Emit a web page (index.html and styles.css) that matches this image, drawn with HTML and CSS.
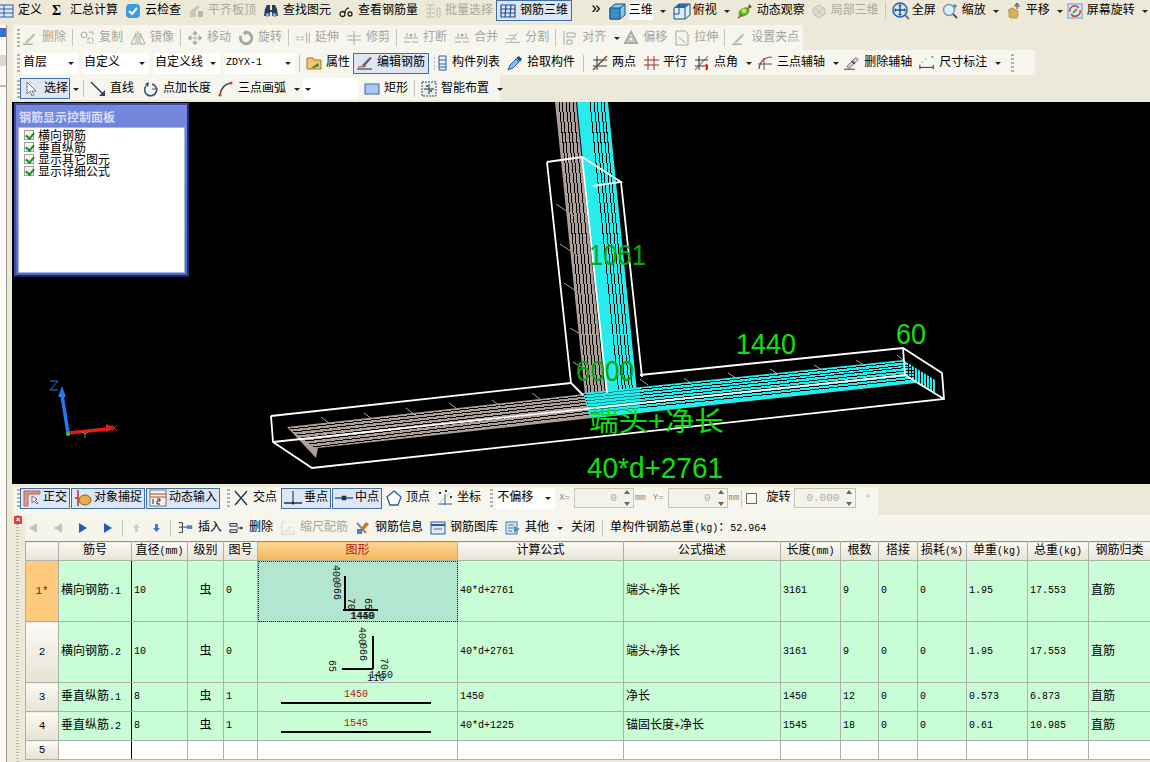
FILE: index.html
```html
<!DOCTYPE html>
<html lang="zh">
<head>
<meta charset="utf-8">
<title>钢筋三维</title>
<link rel="stylesheet" href="styles.css">
</head>
<body>
<svg class="defs" width="0" height="0">
  <symbol id="def" viewBox="0 0 16 16"><rect x="1" y="2" width="14" height="12" fill="#dbe8f8" stroke="#2a5fa8"/><path d="M1 6h14M6 2v12M1 10h14" stroke="#2a5fa8"/></symbol>
  <symbol id="cloud" viewBox="0 0 16 16"><rect x="1" y="1" width="14" height="14" rx="4" fill="#3d9be0"/><path d="M4 8l3 3 5-6" fill="none" stroke="#fff" stroke-width="2"/></symbol>
  <symbol id="level" viewBox="0 0 16 16"><path d="M2 14V8l8-6 2 2-4 4v6z" fill="#c9c8c0"/><rect x="10" y="8" width="5" height="6" fill="#b8b7ae"/></symbol>
  <symbol id="find" viewBox="0 0 16 16"><path d="M2 6l2-4h3v5h2V2h3l2 4 1 7h-6V9H7v4H1z" fill="#23415f"/><circle cx="4.500" cy="12" r="2" fill="#7fa4c8"/><circle cx="11.500" cy="12" r="2" fill="#7fa4c8"/></symbol>
  <symbol id="see" viewBox="0 0 16 16"><path d="M2 11a2.500 2.500 0 105 0 2.500 2.500 0 10-5 0M7 10c0-3 2-5 4-5M10 11a2 2 0 104 0 2 2 0 10-4 0" fill="none" stroke="#222" stroke-width="1.300"/></symbol>
  <symbol id="batch" viewBox="0 0 16 16"><path d="M1 2h9M1 6h9M1 10h9M1 14h9M5 2v12M12 5h3v9h-3z" fill="none" stroke="#bdbcb2"/></symbol>
  <symbol id="rb3d" viewBox="0 0 16 16"><path d="M1 2h14v12H1zM1 6h14M1 10h14M6 2l-1 12M11 2l-1 12" fill="none" stroke="#1c4f8e" stroke-width="1.200"/></symbol>
  <symbol id="cube" viewBox="0 0 18 18"><path d="M1 6l5-4h10v11l-5 4H1z" fill="#7fc7e8" stroke="#1d4f80"/><path d="M1 6h10v11H1z" fill="#3c8dc6" stroke="#1d4f80"/><path d="M11 6l5-4" stroke="#1d4f80"/></symbol>
  <symbol id="topv" viewBox="0 0 18 18"><path d="M1 6l5-4h11v11l-5 4H1z" fill="#dbeef8" stroke="#1d4f80"/><path d="M1 6l5-4h11l-5 4z" fill="#2e6ca6"/><path d="M12 6v11M6 2v10H1" fill="none" stroke="#1d4f80"/></symbol>
  <symbol id="orbit" viewBox="0 0 16 16"><ellipse cx="7" cy="9" rx="6" ry="4" transform="rotate(-35 7 9)" fill="#5aa82c"/><circle cx="7" cy="8" r="2.500" fill="#c7e35a"/><path d="M12 1l3 3-4 2z" fill="#7a4a20"/><path d="M1 15l4-3" stroke="#c03030" stroke-width="1.500"/></symbol>
  <symbol id="part" viewBox="0 0 16 16"><path d="M8 2l6 4v5l-6 4-6-4V6z" fill="#dddcd2" stroke="#c0bfb5"/><path d="M4 5l8 7M12 5l-8 7" stroke="#c0bfb5"/></symbol>
  <symbol id="full" viewBox="0 0 18 18"><circle cx="8" cy="8" r="7" fill="#d8e8f8" stroke="#2a5fa8" stroke-width="1.500"/><path d="M8 3v10M3 8h10" stroke="#1f4f9a" stroke-width="1.500"/><path d="M8 2l2 2H6zM8 14l2-2H6zM2 8l2-2v4zM14 8l-2-2v4z" fill="#1f4f9a"/><path d="M13 13l4 4" stroke="#777" stroke-width="2"/></symbol>
  <symbol id="zoomi" viewBox="0 0 16 16"><circle cx="7" cy="7" r="5.500" fill="#e0edf8" stroke="#7b98b8" stroke-width="1.500"/><path d="M11 11l4 4" stroke="#555" stroke-width="2"/><path d="M13 1v4M11 3h4" stroke="#3a70b0"/></symbol>
  <symbol id="pan" viewBox="0 0 16 16"><path d="M3 14V9L2 7l2-1 1 1V5h2v1h2v1h2l1 2v3l-1 3H4z" fill="#d4b25c" stroke="#9a7a30" stroke-width=".6"/><path d="M11 0v6M9 2l2-2 2 2M8 3h6" fill="none" stroke="#446" stroke-width=".9"/></symbol>
  <symbol id="rot" viewBox="0 0 16 16"><rect x="1" y="1" width="14" height="14" fill="#d8eaf8" stroke="#54a0d8"/><path d="M3 9a5 5 0 019-4M13 7a5 5 0 01-9 4" fill="none" stroke="#d8382a" stroke-width="1.500"/><path d="M6 10l4-4" stroke="#5ba83c" stroke-width="2"/></symbol>

  <symbol id="pen" viewBox="0 0 18 16"><path d="M3 13L13 3l2 2L6 14z" fill="currentColor" opacity=".7"/><path d="M1 15h11" stroke="currentColor" stroke-width="1.500"/></symbol>
  <symbol id="copy" viewBox="0 0 16 16"><circle cx="5" cy="5" r="3" fill="none" stroke="currentColor"/><path d="M9 8h5v5H9z" fill="none" stroke="currentColor" stroke-dasharray="2 1"/><path d="M10 2h4v3" fill="none" stroke="currentColor"/></symbol>
  <symbol id="mirror" viewBox="0 0 16 16"><path d="M8 1v14M6 3L1 14h5zM10 3l5 11h-5z" fill="none" stroke="currentColor"/></symbol>
  <symbol id="move" viewBox="0 0 14 14"><path d="M7 1v12M1 7h12M7 1L5 3.500h4zM7 13l-2-2.500h4zM1 7l2.500-2v4zM13 7l-2.500-2v4z" fill="currentColor" stroke="currentColor" stroke-width=".7"/></symbol>
  <symbol id="rotate" viewBox="0 0 14 14"><path d="M7 2a5 5 0 11-4.500 3" fill="none" stroke="currentColor" stroke-width="2.500"/><path d="M7 0v5L4 2.500z" fill="currentColor"/></symbol>
  <symbol id="ext" viewBox="0 0 18 16"><path d="M1 7h4M1 10h4M7 7h3M7 10h3" stroke="currentColor"/><path d="M13 2v12M16 2v12" stroke="currentColor"/></symbol>
  <symbol id="trim" viewBox="0 0 16 16"><path d="M1 6h14M1 10h14M8 1v14" stroke="currentColor"/></symbol>
  <symbol id="brk" viewBox="0 0 16 16"><path d="M1 12h6M9 12h6M1 8h14M4 3v4M12 3v4" stroke="currentColor"/><circle cx="8" cy="5" r="1.500" fill="currentColor"/></symbol>
  <symbol id="split" viewBox="0 0 18 16"><path d="M1 13h16M1 9h12M4 5h8M14 2L6 12" stroke="currentColor" fill="none"/></symbol>
  <symbol id="align" viewBox="0 0 16 16"><path d="M2 1v14M5 3h8v4H5zM5 10h5v4H5z" fill="none" stroke="currentColor"/></symbol>
  <symbol id="offset" viewBox="0 0 16 16"><path d="M8 2l6 11H2z" fill="none" stroke="currentColor" stroke-width="2"/><path d="M8 6l3 5H5z" fill="none" stroke="currentColor"/></symbol>
  <symbol id="stretch" viewBox="0 0 16 16"><path d="M2 1h9l3 3v11H2zM5 7l6 6" fill="none" stroke="currentColor"/></symbol>

  <symbol id="prop" viewBox="0 0 16 16"><path d="M1 3h6l1 2h7v9H1z" fill="#f0c870" stroke="#9a7a30"/><path d="M5 13l7-5 1 3-5 2z" fill="#3a8a3a"/></symbol>
  <symbol id="edit" viewBox="0 0 16 16"><path d="M1 12c3-1 5 1 8-1" fill="none" stroke="#c03030"/><path d="M5 10l8-8 2 1-8 9z" fill="#667"/><path d="M0 14h15" stroke="#222"/></symbol>
  <symbol id="list" viewBox="0 0 16 16"><path d="M2 3h2M2 7h2M2 11h2M2 14h2" stroke="#778" stroke-dasharray="1 1"/><path d="M7 1h7v14H7zM7 5h7M7 9h7M7 12h7" fill="#e8f0fa" stroke="#2a5fa8"/></symbol>
  <symbol id="pick" viewBox="0 0 16 16"><path d="M1 15l2-5 6-6 3 3-6 6z" fill="#8ab8e8" stroke="#2a5fa8"/><path d="M9 3l3-2 3 3-2 3z" fill="#1d4f9a"/></symbol>
  <symbol id="twop" viewBox="0 0 16 16"><path d="M1 5h14M1 11h14M5 1v14" stroke="#333"/><path d="M1 15L15 1" stroke="#7a4a20" stroke-width="1.500"/></symbol>
  <symbol id="para" viewBox="0 0 16 16"><path d="M1 5h15M1 10h15M5 1v14M11 1v14" stroke="#a03030"/></symbol>
  <symbol id="ang" viewBox="0 0 16 16"><path d="M1 5h13M1 11h13M5 1v14" stroke="#333"/><path d="M1 15L14 1" stroke="#555"/><path d="M12 9a5 5 0 010 6" fill="none" stroke="#d82020" stroke-width="2"/></symbol>
  <symbol id="arc3" viewBox="0 0 16 16"><path d="M2 14C3 6 8 2 15 2" fill="none" stroke="#c03030" stroke-width="1.200"/><path d="M1 9h14M7 3v12" stroke="#556"/></symbol>
  <symbol id="delx" viewBox="0 0 18 16"><path d="M3 12L13 2l3 2L6 14z" fill="#d8d0c0" stroke="#667"/><path d="M9 6l3 3" stroke="#4a3a8a" stroke-width="2"/><path d="M0 15h12" stroke="#222"/></symbol>
  <symbol id="dim" viewBox="0 0 18 16"><path d="M1 10v5M16 10v5M1 13h15" stroke="#222"/><path d="M3 7h1M7 4h1M14 1h2" stroke="#6a9a5a" stroke-width="2"/></symbol>

  <symbol id="cur" viewBox="0 0 12 16"><path d="M2 1v12l3-3 2 5 2-1-2-4h4z" fill="#fff" stroke="#778"/></symbol>
  <symbol id="lin" viewBox="0 0 16 16"><path d="M1 1l13 13" stroke="#345" stroke-width="1.500"/><path d="M15 15V9l-6 6z" fill="#345"/></symbol>
  <symbol id="ptlen" viewBox="0 0 16 16"><path d="M3 5a6 6 0 106-2" fill="none" stroke="#2a4f80" stroke-width="1.500"/><path d="M6 1L2 3l3 3z" fill="#345"/><path d="M9 8h6" stroke="#c03030"/></symbol>
  <symbol id="arc" viewBox="0 0 16 16"><path d="M2 14C3 6 7 3 13 2" fill="none" stroke="#444" stroke-width="1.500"/><circle cx="2" cy="14" r="1.500" fill="#d84020"/><circle cx="13" cy="2" r="1.500" fill="#d84020"/></symbol>
  <symbol id="rec" viewBox="0 0 16 16"><rect x="1" y="3" width="14" height="10" fill="#a8c8f0" stroke="#3a6ab0"/></symbol>
  <symbol id="smart" viewBox="0 0 16 16"><rect x="1" y="1" width="14" height="14" fill="#e8efe8" stroke="#445" stroke-dasharray="2 1"/><path d="M8 3v10M3 8h10" stroke="#333"/><path d="M5 4h2v2H5zM9 9h2v2H9z" fill="#2a70c0"/></symbol>

  <symbol id="ortho" viewBox="0 0 18 18"><path d="M1 2h16v3H5v12H1z" fill="#d89a8a" stroke="#b06a5a"/><path d="M9 7v7l2-2 3 3 1-1-3-3 2-1z" fill="#fff" stroke="#778"/></symbol>
  <symbol id="snap" viewBox="0 0 18 18"><path d="M4 1v16M1 9h3" stroke="#b03030" stroke-width="1.500"/><ellipse cx="11" cy="11" rx="6" ry="5" fill="#e0b050" stroke="#906010"/></symbol>
  <symbol id="dyn" viewBox="0 0 18 18"><rect x="1" y="1" width="16" height="16" fill="#f4f4ea" stroke="#777"/><path d="M1 5h16M1 8h16" stroke="#b04a30"/><path d="M4 10v5M8 10h3v2H8v3h3" fill="none" stroke="#223"/></symbol>
  <symbol id="cross" viewBox="0 0 16 16"><path d="M2 1l12 14M14 1L2 15" stroke="#234" stroke-width="1.300"/></symbol>
  <symbol id="perp" viewBox="0 0 18 16"><path d="M9 1v12" stroke="#2a5fa8" stroke-width="1.400"/><path d="M0 13h18" stroke="#234" stroke-width="1.500"/><circle cx="9" cy="13" r="1.500" fill="#234"/></symbol>
  <symbol id="midp" viewBox="0 0 16 16"><path d="M0 8h16" stroke="#2a5fa8" stroke-width="1.400"/><rect x="6" y="6" width="4" height="4" fill="#234"/></symbol>
  <symbol id="vert" viewBox="0 0 16 16"><path d="M8 1l7 6-3 8H4L1 7z" fill="#fff" stroke="#2a5fa8" stroke-width="1.300"/></symbol>
  <symbol id="coord" viewBox="0 0 16 16"><path d="M1 14h14M8 4v11" stroke="#2a5fa8"/><path d="M3 12l10-9" stroke="#5a9a5a" stroke-dasharray="1 2"/><path d="M2 3h2M8 1h2M13 7h2" stroke="#334" stroke-width="2"/></symbol>

  <symbol id="ins" viewBox="0 0 18 14"><path d="M1 1h4M1 6h4M1 12h4M5 1v11" stroke="#223"/><path d="M6 6h4" stroke="#223"/><rect x="10" y="4" width="6" height="4" fill="#4a80d0"/></symbol>
  <symbol id="rm" viewBox="0 0 18 14"><path d="M1 2h8v3H1zM1 9h8v3H1z" fill="#dde" stroke="#223"/><path d="M9 7h6" stroke="#223"/><path d="M16 7l-3-2v4z" fill="#223"/></symbol>
  <symbol id="scale" viewBox="0 0 16 16"><path d="M2 14V2h3M2 14h12V11M5 11h6M8 8h3" fill="none" stroke="#b8b7ae" stroke-dasharray="1 1"/></symbol>
  <symbol id="info" viewBox="0 0 16 16"><path d="M2 3l9 10" stroke="#888" stroke-width="2"/><path d="M11 2l3 2-8 9-3 1 1-3z" fill="#c07a30"/><path d="M2 9h5v5H2z" fill="#4a80d0"/></symbol>
  <symbol id="lib" viewBox="0 0 16 16"><rect x="1" y="2" width="14" height="12" fill="#dce8f6" stroke="#2a5fa8"/><path d="M1 5h14" stroke="#2a5fa8" stroke-width="2"/><path d="M4 9h8" stroke="#667"/></symbol>
  <symbol id="other" viewBox="0 0 16 16"><rect x="1" y="2" width="11" height="12" fill="#d8e6f6" stroke="#4a7ab0"/><path d="M3 5h6M3 8h6M3 11h4" stroke="#4a7ab0"/><path d="M9 6l6 3-6 4z" fill="#4a90d0"/></symbol>
</svg>

<div class="tb tb-top">
  <span class="it first"><svg class="ic"><use href="#def"/></svg>定义</span>
  <span class="it wide"><b class="sigma">Σ</b>汇总计算</span>
  <span class="it"><svg class="ic"><use href="#cloud"/></svg>云检查</span>
  <span class="it off"><svg class="ic"><use href="#level"/></svg>平齐板顶</span>
  <span class="it"><svg class="ic"><use href="#find"/></svg>查找图元</span>
  <span class="it"><svg class="ic"><use href="#see"/></svg>查看钢筋量</span>
  <span class="it off"><svg class="ic"><use href="#batch"/></svg>批量选择</span>
  <span class="it on tight"><svg class="ic"><use href="#rb3d"/></svg>钢筋三维</span>
  <span class="more">»</span>
  <div class="view-tools">
    <span class="it snug"><svg class="ic big"><use href="#cube"/></svg><span class="white">三维</span></span><i class="car"></i>
    <span class="it snug"><svg class="ic big"><use href="#topv"/></svg>俯视</span><i class="car"></i>
    <span class="it"><svg class="ic"><use href="#orbit"/></svg>动态观察</span>
    <span class="it off"><svg class="ic"><use href="#part"/></svg>局部三维</span>
    <i class="sep"></i>
    <span class="it snug"><svg class="ic big"><use href="#full"/></svg>全屏</span>
    <span class="it"><svg class="ic"><use href="#zoomi"/></svg>缩放</span><i class="car"></i>
    <span class="it"><svg class="ic"><use href="#pan"/></svg>平移</span><i class="car"></i>
    <span class="it pull3"><svg class="ic"><use href="#rot"/></svg>屏幕旋转</span><i class="car"></i>
  </div>
</div>

<div class="main">
  <div class="side"><i class="side-tab"></i><i class="side-a"></i><i class="side-b"></i></div>
  <div class="work">
    <div class="tb band disabled w-790">
      <i class="grip"></i>
      <span class="it"><svg class="ic"><use href="#pen"/></svg>删除</span><i class="sep"></i>
      <span class="it"><svg class="ic"><use href="#copy"/></svg>复制</span>
      <span class="it"><svg class="ic"><use href="#mirror"/></svg>镜像</span><i class="sep"></i>
      <span class="it"><svg class="ic"><use href="#move"/></svg>移动</span>
      <span class="it"><svg class="ic"><use href="#rotate"/></svg>旋转</span><i class="sep"></i>
      <span class="it"><svg class="ic"><use href="#ext"/></svg>延伸</span>
      <span class="it"><svg class="ic"><use href="#trim"/></svg>修剪</span><i class="sep"></i>
      <span class="it"><svg class="ic"><use href="#brk"/></svg>打断</span>
      <span class="it"><svg class="ic"><use href="#brk"/></svg>合并</span>
      <span class="it"><svg class="ic"><use href="#split"/></svg>分割</span><i class="sep"></i>
      <span class="it"><svg class="ic"><use href="#align"/></svg>对齐</span><i class="car"></i>
      <span class="it"><svg class="ic"><use href="#offset"/></svg>偏移</span>
      <span class="it"><svg class="ic"><use href="#stretch"/></svg>拉伸</span><i class="sep"></i>
      <span class="it"><svg class="ic"><use href="#pen"/></svg>设置夹点</span>
    </div>
    <div class="tb band w-1022 row3">
      <i class="grip"></i>
      <span class="combo c-56">首层<i class="car"></i></span>
      <span class="combo c-66">自定义<i class="car"></i></span>
      <span class="combo c-66">自定义线<i class="car"></i></span>
      <span class="combo c-70 narrow">ZDYX-1<i class="car"></i></span>
      <i class="sep"></i>
      <span class="it"><svg class="ic"><use href="#prop"/></svg>属性</span>
      <span class="it on tight"><svg class="ic"><use href="#edit"/></svg>编辑钢筋</span>
      <span class="it"><svg class="ic"><use href="#list"/></svg>构件列表</span>
      <span class="it"><svg class="ic"><use href="#pick"/></svg>拾取构件</span>
      <i class="sep sep-wide"></i>
      <span class="it"><svg class="ic"><use href="#twop"/></svg>两点</span>
      <span class="it"><svg class="ic"><use href="#para"/></svg>平行</span>
      <span class="it"><svg class="ic"><use href="#ang"/></svg>点角</span><i class="car"></i>
      <span class="it"><svg class="ic"><use href="#arc3"/></svg>三点辅轴</span><i class="car"></i>
      <span class="it"><svg class="ic"><use href="#delx"/></svg>删除辅轴</span>
      <span class="it"><svg class="ic"><use href="#dim"/></svg>尺寸标注</span><i class="car"></i>
      <i class="grip end"></i>
    </div>
    <div class="tb band w-487 row4">
      <i class="grip"></i>
      <span class="it on sel"><svg class="ic"><use href="#cur"/></svg>选择</span><i class="car"></i><i class="sep"></i>
      <span class="it after-line"><svg class="ic"><use href="#lin"/></svg>直线</span>
      <span class="it"><svg class="ic"><use href="#ptlen"/></svg>点加长度</span>
      <span class="it"><svg class="ic"><use href="#arc"/></svg>三点画弧</span><i class="car car-tight"></i>
      <span class="combo c-55"><i class="car"></i></span>
      <span class="it"><svg class="ic"><use href="#rec"/></svg>矩形</span><i class="sep"></i>
      <span class="it"><svg class="ic"><use href="#smart"/></svg>智能布置</span><i class="car"></i>
    </div>

    <div class="view">
      <svg class="scene" width="1138" height="382" viewBox="12 102 1138 382">
        <polygon class="fb" points="555,102 576,102 605,395 585,395"/>
        <path class="gaps" d="M559,102L588,395M562,102L591,395M566,102L595,395M569,102L598,395M573,102L602,395"/>
        <polygon class="fc" points="577,102 608,102 637,392 606,395"/>
        <path class="gaps" d="M590,102L619,395M594,102L623,395M597,102L626,395M601,102L630,395M604,102L633,395"/>
        <polygon class="fb" points="287,427 585,394 592,418 318,448 316,458"/>
        <path class="gaps" d="M290,429L586,396M293,432L587,399M297,435L588,402M301,438L589,405M305,441L590,408M309,444L591,411M313,447L592,414"/>
        <polygon class="fc" points="583,393 903,360 935,380 935,393 916,383 603,417 590,418"/>
        <path class="gaps" d="M584,395L905,362M585,398L908,365M586,401L911,367M587,404L915,370M588,407L915,373M589,410L915,376M590,413L915,379M908,362v14M911,364v15M914,366v15M917,368v16M920,370v15M923,372v16M926,374v16M929,376v16M932,378v15"/>
        <polygon points="586,394 640,388 640,412 603,417 590,418" fill="#22eeee" opacity=".6"/>
        <path class="ticks" d="M556,204l18,12M560,244l18,12M564,283l18,12M570,328l10,6M573,362l10,6M321,417l8,6M364,413l8,6M406,408l8,6M449,403l8,6M492,400l8,6M532,393l8,6M640,379l8,6M684,378l8,6M728,373l8,5M770,369l8,5M814,365l8,5M856,360l8,5M897,355l6,5"/>
        <path class="wire" d="M547,162L582,157L621,182L593,186M547,162L571,383L583,395M582,157L607,393M621,182L642,377"/>
        <path class="wire" d="M271,416L571,383M640,375L903,348L942,373L944,399L312,468L273,442L271,416M273,442L905,375L903,348M905,375L944,399"/>
        <text class="lbl dark" x="589" y="265" textLength="57" lengthAdjust="spacingAndGlyphs">1061</text>
        <text class="lbl dark" x="576" y="381" textLength="58" lengthAdjust="spacingAndGlyphs">6000</text>
        <text class="lbl" x="736" y="354" textLength="60" lengthAdjust="spacingAndGlyphs">1440</text>
        <text class="lbl" x="896" y="344" textLength="30" lengthAdjust="spacingAndGlyphs">60</text>
        <text class="lbl cjk" x="589" y="431" textLength="135" lengthAdjust="spacingAndGlyphs">端头+净长</text>
        <text class="lbl" x="587" y="478" textLength="136" lengthAdjust="spacingAndGlyphs">40*d+2761</text>
        <path d="M68,433L62,395" stroke="#2a78e8" stroke-width="3.500"/>
        <path d="M62,386l-4,11h8z" fill="#2a78e8"/>
        <path d="M68,433L108,429" stroke="#e81818" stroke-width="3.500"/>
        <path d="M116,428l-10,-4v8z" fill="#e81818"/>
        <path d="M50,381h8l-8,9h8" fill="none" stroke="#2a78e8"/>
        <path d="M112,425l5,6M117,425l-5,6" stroke="#a03030"/>
        <path d="M81,431l4,3 4,-3M85,434v4" fill="none" stroke="#20c040"/>
        <circle cx="68" cy="434" r="2" fill="#20d040"/>
      </svg>
      <div class="panel">
        <div class="panel-title">钢筋显示控制面板</div>
        <div class="panel-body">
          <label class="chk"><i class="box"></i>横向钢筋</label>
          <label class="chk"><i class="box"></i>垂直纵筋</label>
          <label class="chk"><i class="box"></i>显示其它图元</label>
          <label class="chk"><i class="box"></i>显示详细公式</label>
        </div>
      </div>
    </div>

    <div class="tb band w-865 snapbar">
      <i class="grip g-first"></i>
      <span class="it on"><svg class="ic big"><use href="#ortho"/></svg>正交</span>
      <span class="it on"><svg class="ic big"><use href="#snap"/></svg>对象捕捉</span>
      <span class="it on"><svg class="ic big"><use href="#dyn"/></svg>动态输入</span>
      <i class="grip g-mid"></i>
      <span class="it"><svg class="ic"><use href="#cross"/></svg>交点</span>
      <span class="it on"><svg class="ic big"><use href="#perp"/></svg>垂点</span>
      <span class="it on"><svg class="ic big"><use href="#midp"/></svg>中点</span>
      <span class="it"><svg class="ic"><use href="#vert"/></svg>顶点</span>
      <span class="it coord-it"><svg class="ic"><use href="#coord"/></svg>坐标</span>
      <i class="grip g-last"></i>
      <span class="combo c-59">不偏移<i class="car"></i></span>
      <span class="lab">X=</span><span class="num">0<i class="spin"></i></span><span class="lab">mm</span>
      <span class="lab lab-y">Y=</span><span class="num">0<i class="spin"></i></span><span class="lab">mm</span>
      <i class="sep"></i><i class="check"></i>
      <span class="rot-lab">旋转</span><span class="num wide-num">0.000<i class="spin"></i></span><span class="lab deg">°</span>
    </div>

    <div class="lower">
      <div class="dock"><i class="closex">×</i></div>
      <div class="editor">
        <div class="tb gridbar">
          <i class="nav off2"></i><i class="nav off2"></i><i class="nav"></i><i class="nav"></i><i class="sep"></i>
          <i class="arrow up"></i><i class="arrow down"></i><i class="sep"></i>
          <span class="it"><svg class="ic"><use href="#ins"/></svg>插入</span>
          <span class="it"><svg class="ic"><use href="#rm"/></svg>删除</span>
          <span class="it off"><svg class="ic"><use href="#scale"/></svg>缩尺配筋</span>
          <span class="it"><svg class="ic"><use href="#info"/></svg>钢筋信息</span>
          <span class="it"><svg class="ic"><use href="#lib"/></svg>钢筋图库</span>
          <span class="it"><svg class="ic"><use href="#other"/></svg>其他</span><i class="car"></i>
          <span class="it">关闭</span><i class="sep"></i>
          <span class="total">单构件钢筋总重<small>(kg)</small>：<small>52.964</small></span>
        </div>
        <table class="grid">
          <colgroup>
            <col class="c33"><col class="c73"><col class="c56"><col class="c36"><col class="c34"><col class="c200"><col class="c166"><col class="c157"><col class="c60"><col class="c38"><col class="c39"><col class="c49"><col class="c61"><col class="c61"><col class="c62">
          </colgroup>
          <thead>
            <tr class="h">
              <th></th><th>筋号</th><th>直径<small>(mm)</small></th><th>级别</th><th>图号</th><th class="hsel">图形</th><th>计算公式</th><th>公式描述</th><th>长度<small>(mm)</small></th><th>根数</th><th>搭接</th><th>损耗<small>(%)</small></th><th>单重<small>(kg)</small></th><th>总重<small>(kg)</small></th><th>钢筋归类</th>
            </tr>
          </thead>
          <tbody>
            <tr class="r61">
              <th class="rsel">1*</th><td class="name"><b>横向钢筋</b>.1</td><td>10</td><td class="ctr"><b>虫</b></td><td>0</td>
              <td class="shape cellsel">
                <svg class="draw" width="198" height="60" viewBox="258 561 198 60">
                  <path d="M345,576V610M343,610H378" stroke="#000" stroke-width="2"/>
                  <text class="dt" transform="translate(333,565) rotate(90)">400</text>
                  <text class="dt" transform="translate(341,600) rotate(-90)">990</text>
                  <text class="dt" transform="translate(348,598) rotate(90)">70</text>
                  <text class="dt" transform="translate(365,598) rotate(90)">65</text>
                  <text class="dt" x="350" y="619">1440</text><text class="dt" x="351" y="619">1450</text>
                </svg>
              </td>
              <td>40*d+2761</td><td><b>端头</b>+<b>净长</b></td><td>3161</td><td>9</td><td>0</td><td>0</td><td>1.95</td><td>17.553</td><td><b>直筋</b></td>
            </tr>
            <tr class="r61">
              <th>2</th><td class="name"><b>横向钢筋</b>.2</td><td>10</td><td class="ctr"><b>虫</b></td><td>0</td>
              <td class="shape">
                <svg class="draw" width="200" height="60" viewBox="257 622 200 60">
                  <path d="M372,636V669M341,669H372" stroke="#000" stroke-width="2"/>
                  <text class="dt" transform="translate(358,627) rotate(90)">400</text>
                  <text class="dt" transform="translate(366,661) rotate(-90)">990</text>
                  <text class="dt" transform="translate(328,660) rotate(90)">65</text>
                  <text class="dt" transform="translate(380,658) rotate(90)">70</text>
                  <text class="dt" x="368" y="678">1450</text><text class="dt" x="366" y="681">110</text>
                </svg>
              </td>
              <td>40*d+2761</td><td><b>端头</b>+<b>净长</b></td><td>3161</td><td>9</td><td>0</td><td>0</td><td>1.95</td><td>17.553</td><td><b>直筋</b></td>
            </tr>
            <tr class="r29">
              <th>3</th><td class="name"><b>垂直纵筋</b>.1</td><td>8</td><td class="ctr"><b>虫</b></td><td>1</td>
              <td class="shape top"><div class="bar">1450</div></td>
              <td>1450</td><td><b>净长</b></td><td>1450</td><td>12</td><td>0</td><td>0</td><td>0.573</td><td>6.873</td><td><b>直筋</b></td>
            </tr>
            <tr class="r29">
              <th>4</th><td class="name"><b>垂直纵筋</b>.2</td><td>8</td><td class="ctr"><b>虫</b></td><td>1</td>
              <td class="shape top"><div class="bar">1545</div></td>
              <td>40*d+1225</td><td><b>锚固长度</b>+<b>净长</b></td><td>1545</td><td>18</td><td>0</td><td>0</td><td>0.61</td><td>10.985</td><td><b>直筋</b></td>
            </tr>
            <tr class="r19 blank">
              <th>5</th><td class="name"></td><td></td><td></td><td></td><td></td><td></td><td></td><td></td><td></td><td></td><td></td><td></td><td></td><td></td>
            </tr>
          </tbody>
        </table>
      </div>
    </div>
  </div>
</div>
</body>
</html>
```

FILE: styles.css
```css
* { box-sizing: border-box; }
html, body { margin: 0; padding: 0; height: 762px; overflow: hidden; }
body {
  width: 1150px;
  background: #ece9d8;
  color: #000;
  font: 12px/14px "Liberation Mono", "Noto Sans CJK SC", monospace;
}
.defs { position: absolute; }

/* toolbars */
.tb { display: flex; align-items: center; gap: 7px; height: 25px; white-space: nowrap; }
.tb-top { height: 25px; padding-bottom: 4px; }
.band { background: #f6f5ee; }
.w-790 { width: 790px; }
.w-1022 { width: 1022px; }
.w-487 { width: 487px; }
.w-865 { width: 865px; }
.it { display: flex; align-items: center; gap: 4px; height: 21px; flex: none; }
.ic { width: 16px; height: 16px; flex: none; }
.ic.big { width: 18px; height: 18px; }
.first { margin-left: -2px; }
.wide { margin-left: 3px; gap: 8px; }
.sigma { font: bold 14px "Liberation Serif", serif; width: 10px; }
.on { background: #dde6f2; border: 1px solid #3f6ea8; padding: 0 3px; }
.tight { margin-left: -4px; margin-right: -4px; }
.off { color: #a9a89e; }
.disabled { color: #a6a59b; }
.disabled .ic { color: #aaa99f; }
.disabled .sep { margin: 0 -1px; }
.disabled .car { margin-right: -4px; }
.view-tools { display: flex; align-items: center; gap: 6px; }
.snug { gap: 2px; }
.pull3 { margin-left: -3px; }
.white { background: #fff; padding: 2px 0; }
.more { font-size: 16px; margin: -4px 1px 0 16px; }
.car { flex: none; width: 0; height: 0; border: 3px solid transparent; border-top: 3px solid #222; border-bottom: 0; margin: 1px 1px 0; }
.sep { flex: none; width: 1px; height: 17px; background: #c9c7b6; }
.grip { flex: none; width: 3px; height: 18px; margin-left: 4px; margin-right: -5px; background: repeating-linear-gradient(#b3b1a3 0 2px, transparent 2px 4px); }
.grip.end { margin-left: 5px; }
.combo { display: flex; align-items: center; justify-content: space-between; height: 21px; background: #fff; padding: 0 3px 0 1px; flex: none; }
.c-55 { width: 55px; }
.c-56 { width: 56px; }
.c-59 { width: 59px; }
.c-66 { width: 66px; }
.c-70 { width: 70px; }
.narrow { font-size: 10px; }
.row3 { padding-top: 1px; }
.row3 .combo { margin-right: -2px; }
.row3 .sep { margin: 0 -1px; }
.row3 .sep-wide { margin: 0 1px; }
.row3 > .car { margin-right: -2px; }
.row4 { padding-top: 2px; }
.row4 .sep { margin: 0 -1px; }
.row4 > .car { margin-right: -2px; }
.row4 > .car-tight { margin-right: -4px; }
.row4 .combo { margin-right: -1px; }
.after-line { margin-right: 2px; }
.sel { gap: 7px; padding: 0 3px 0 4px; width: 50px; margin-left: -2px; margin-right: -5px; }
.sel .ic { width: 12px; }

/* layout */
.main { display: flex; height: 737px; }
.side { position: relative; flex: none; width: 13px; }
.side::before { content: ""; position: absolute; left: 0; top: 0; bottom: 0; width: 6px; background: #fbfbf6; border-right: 1px solid #9a9a90; }
.side i { position: absolute; left: 0; width: 6px; }
.side-tab { top: 3px; height: 9px; background: #3d6fd0; }
.side-a { top: 30px; height: 11px; background: #dcdad0; }
.side-b { top: 60px; height: 2px; background: #bbb; }
.work { flex: none; width: 1137px; }
.view { position: relative; width: 1138px; height: 382px; margin: 2px 0 0 -1px; background: #000; overflow: hidden; }
.scene { display: block; }
.fb { fill: #ab9f98; }
.fc { fill: #28ecec; }
.gaps { fill: none; stroke: #000; stroke-width: 1; shape-rendering: crispEdges; }
.wire { fill: none; stroke: #fff; stroke-width: 1.800; }
.ticks { fill: none; stroke: #a89f98; stroke-width: 1; }
.lbl { fill: #10e010; font: 29px "Liberation Sans", sans-serif; }
.lbl.dark { fill: #0ba50b; }
.lbl.cjk { font: 27px "Noto Sans CJK SC", sans-serif; }

/* panel over the drawing */
.panel { position: absolute; left: 2px; top: 1px; width: 175px; height: 174px; background: linear-gradient(#7488dc, #5468c8); border: 2px solid #3a4ea8; border-right-color: #242e70; border-bottom-color: #1a2258; padding: 0 2px; }
.panel-title { height: 22px; color: #d8defa; font: bold 12px/24px "Noto Sans CJK SC", sans-serif; padding-left: 1px; }
.panel-body { height: 146px; background: #fff; border: 1px solid #a8b4d8; padding: 1px 0 0 5px; }
.chk { display: flex; align-items: center; gap: 4px; height: 12px; color: #000; font: 12px/12px "Noto Sans CJK SC", sans-serif; }
.box { width: 10px; height: 10px; background: #f2f2ea; border: 1px solid #a09f94; position: relative; }
.box::after { content: ""; position: absolute; left: 2px; top: 0; width: 4px; height: 6px; border: solid #1c8a2c; border-width: 0 2px 2px 0; transform: rotate(40deg); }

/* snap bar */
.snapbar { height: 28px; margin-top: 3px; gap: 4px; padding-bottom: 6px; }
.snapbar .on { gap: 2px; padding: 0 2px; }
.snapbar .on + .on { margin-left: -3px; }
.g-first { margin-right: -4px; }
.g-mid { margin-left: 3px; margin-right: -1px; }
.g-last { margin-left: 5px; margin-right: -1px; }
.coord-it { margin-left: 3px; }
.lab { color: #888; font-size: 9px; flex: none; }
.lab-y { margin-left: 3px; }
.deg { margin-left: 5px; }
.num { display: flex; justify-content: flex-end; align-items: center; gap: 7px; width: 60px; height: 20px; margin-right: -3px; padding-right: 2px; background: #f4f3ea; border: 1px solid #c5c3b3; color: #aaa; font-size: 11px; flex: none; }
.wide-num { width: 62px; margin-right: 0; }
.spin { position: relative; width: 7px; height: 14px; }
.spin::before, .spin::after { content: ""; position: absolute; left: 0; border: 3px solid transparent; border-left-width: 3.500px; border-right-width: 3.500px; }
.spin::before { top: -1px; border-bottom: 4px solid #666; border-top: 0; }
.spin::after { bottom: -1px; border-top: 4px solid #666; border-bottom: 0; }
.snapbar .sep { margin-left: -2px; }
.check { width: 11px; height: 11px; background: #f8f8f0; border: 1px solid #6a6a60; flex: none; }
.rot-lab { margin-left: 5px; }

/* lower area */
.lower { display: flex; height: 250px; margin-left: -1px; }
.dock { flex: none; width: 13px; position: relative; background: repeating-linear-gradient(#b9b7a6 0 1px, transparent 1px 3px) 4px 0 / 3px 100% no-repeat; }
.closex { position: absolute; left: 2px; top: 1px; width: 8px; height: 8px; background: #d84030; color: #fff; font: bold 8px/8px "Liberation Sans", sans-serif; text-align: center; border-radius: 1px; }
.editor { flex: none; width: 1125px; }
.gridbar { height: 26px; background: #f6f5ec; gap: 7px; }
.nav { flex: none; width: 0; height: 0; border: 5px solid transparent; border-left: 8px solid #2a5ab8; border-right: 0; margin: 0 5px; }
.nav:first-child { margin-left: 4px; }
.nav + .sep { margin-left: -2px; }
.off2 { border-left: 0; border-right: 8px solid #c4c3b8; }
.arrow { flex: none; width: 7px; height: 8px; margin: 0 3px; background: #3c72d0; }
.arrow.up { background: #cfcec4; clip-path: polygon(50% 0, 100% 50%, 70% 50%, 70% 100%, 30% 100%, 30% 50%, 0 50%); }
.arrow.down { clip-path: polygon(30% 0, 70% 0, 70% 50%, 100% 50%, 50% 100%, 0 50%, 30% 50%); }
.total small { font-size: 10px; }

/* grid */
.grid { table-layout: fixed; width: 1125px; border-collapse: collapse; font: 10px/14px "Liberation Mono", "Noto Sans CJK SC", monospace; }
.grid th, .grid td { border: 1px solid #aeb0aa; overflow: hidden; padding: 0; white-space: nowrap; }
.grid th { font-weight: normal; background: linear-gradient(#fbfaf4, #e6e3d4); text-align: center; font-size: 11px; }
.grid thead th { font-size: 12px; }
.grid small { font-size: 10px; }
.grid td { background: #c9fdd5; padding-left: 2px; font-size: 10px; }
.grid td b { font-weight: normal; font-size: 12px; }
.c33 { width: 33px; } .c73 { width: 73px; } .c56 { width: 56px; } .c36 { width: 36px; } .c34 { width: 34px; }
.c200 { width: 200px; } .c166 { width: 166px; } .c157 { width: 157px; } .c60 { width: 60px; } .c38 { width: 38px; }
.c39 { width: 39px; } .c49 { width: 49px; } .c61 { width: 61px; } .c62 { width: 62px; }
.h { height: 19px; }
.h th { border-top-color: #8c8f90; }
.r61 { height: 61px; } .r29 { height: 29px; } .r19 { height: 19px; }
.grid th.hsel { background: linear-gradient(#fbd795, #f4b65c); color: #b01818; }
.grid th.rsel { background: #fdca7e; color: #8a1010; }
.grid td.name { border-right: 1px solid #000; }
.grid td.ctr { text-align: center; padding: 0; }
.grid td.shape { padding: 0; }
.grid td.top { vertical-align: top; }
.grid td.cellsel { background: #b3e6d1; outline: 1px dotted #222; outline-offset: -1px; }
.grid .blank td { background: #fff; }
.draw { display: block; }
.dt { font: 10px "Liberation Mono", monospace; fill: #111; }
.bar { width: 150px; margin: 5px 0 0 23px; height: 16px; border-bottom: 2px solid #000; text-align: center; color: #b02020; line-height: 14px; font-size: 10px; }
```
